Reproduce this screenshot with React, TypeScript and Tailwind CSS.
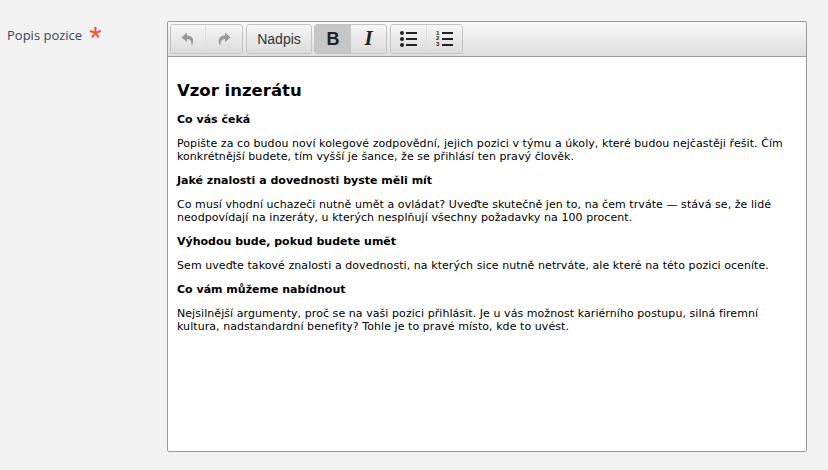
import { ReactNode } from "react";

const groupBtn = "flex items-center justify-center h-[28px] bg-gradient-to-b from-[#f6f6f6] to-[#dcdcdc]";

function Group({ children, gap }: { children: ReactNode; gap: string }) {
  return (
    <div className={`flex h-[30px] border border-[#c4c4c4] rounded-[3px] overflow-hidden ${gap}`}>
      {children}
    </div>
  );
}

function Undo({ flip }: { flip?: boolean }) {
  return (
    <svg width="14" height="14" viewBox="0 0 14 14" className={flip ? "-scale-x-100" : ""}>
      <path d="M6 0.5 L0.5 5.5 L6 10 L6 7 C9 7 10.5 9 10.8 13.5 C13.5 9.5 12.5 3.5 6 3.5 Z" fill="#999" />
    </svg>
  );
}

function Lines() {
  return (
    <svg width="17" height="16" viewBox="0 0 17 16" className="absolute left-0 top-0">
      <rect x="6" y="1" width="11" height="2" fill="#222" />
      <rect x="6" y="7" width="11" height="2" fill="#222" />
      <rect x="6" y="13" width="11" height="2" fill="#222" />
    </svg>
  );
}

function Bullets() {
  return (
    <div className="relative w-[17px] h-[16px]">
      <svg width="5" height="16" viewBox="0 0 5 16" className="absolute left-0 top-0">
        <circle cx="2" cy="2" r="2" fill="#222" />
        <circle cx="2" cy="8" r="2" fill="#222" />
        <circle cx="2" cy="14" r="2" fill="#222" />
      </svg>
      <Lines />
    </div>
  );
}

function Numbers() {
  return (
    <div className="relative w-[17px] h-[16px]">
      <div className="w-[5px] flex flex-col font-['Liberation_Sans',sans-serif] font-bold text-[6px] leading-[5.4px] text-[#222]">
        <span>1</span>
        <span>2</span>
        <span>3</span>
      </div>
      <Lines />
    </div>
  );
}

const h = "font-bold mb-[11px]";
const p = "mb-[11px] tracking-[0.064px]";

export default function App() {
  return (
    <div className="w-[828px] h-[470px] bg-[#f2f2f2] flex pt-[21px] overflow-hidden">
      <div className="w-[167px] pl-[7px] pt-[5px] flex items-start font-['Open_Sans',sans-serif] text-[13px] leading-[18px] text-[#37475a]">
        <span>Popis pozice</span>
        <span className="ml-[7px] mt-[-4px] text-[#f0522b] text-[32px] leading-[32px] font-['Liberation_Sans',sans-serif]">*</span>
      </div>
      <div className="w-[640px] h-[431px] border border-[#999] rounded-[2px] flex flex-col bg-white">
        <div className="h-[35px] shrink-0 flex items-start pl-[2px] pt-[2px] border-b border-[#999] bg-gradient-to-b from-[#f8f8f8] to-[#dedede]">
          <Group gap="mr-[3px]">
            <div className={`${groupBtn} w-[35px] border-r border-[#e0e0e0]`}><Undo /></div>
            <div className={`${groupBtn} w-[36px]`}><Undo flip /></div>
          </Group>
          <Group gap="mr-[2px]">
            <div className={`${groupBtn} w-[64px] font-['Liberation_Sans',sans-serif] text-[14px] text-[#333]`}>Nadpis</div>
          </Group>
          <Group gap="mr-[3px]">
            <div className="flex items-center justify-center h-[28px] w-[36px] bg-[#c6c6c6] font-['Liberation_Sans',sans-serif] font-bold text-[18px] text-[#222]">B</div>
            <div className={`${groupBtn} w-[35px] font-['Liberation_Serif',serif] italic font-bold text-[21px] text-[#222]`}>I</div>
          </Group>
          <Group gap="">
            <div className={`${groupBtn} w-[36px] border-r border-[#e0e0e0]`}><Bullets /></div>
            <div className={`${groupBtn} w-[35px]`}><Numbers /></div>
          </Group>
        </div>
        <div className="flex-1 px-[9px] pt-[23px] font-['DejaVu_Sans',sans-serif] text-[11px] leading-[13px] text-black">
          <h1 className="font-bold text-[16.5px] leading-[21px] mb-[12px]">Vzor inzerátu</h1>
          <div className={h}>Co vás čeká</div>
          <div className={p}>Popište za co budou noví kolegové zodpovědní, jejich pozici v týmu a úkoly, které budou nejčastěji řešit. Čím konkrétnější budete, tím vyšší je šance, že se přihlásí ten pravý člověk.</div>
          <div className={h}>Jaké znalosti a dovednosti byste měli mít</div>
          <div className={p}>Co musí vhodní uchazeči nutně umět a ovládat? Uveďte skutečně jen to, na čem trváte — stává se, že lidé neodpovídají na inzeráty, u kterých nesplňují všechny požadavky na 100 procent.</div>
          <div className={h}>Výhodou bude, pokud budete umět</div>
          <div className={p}>Sem uveďte takové znalosti a dovednosti, na kterých sice nutně netrváte, ale které na této pozici oceníte.</div>
          <div className={h}>Co vám můžeme nabídnout</div>
          <div className={p}>Nejsilnější argumenty, proč se na vaši pozici přihlásit. Je u vás možnost kariérního postupu, silná firemní kultura, nadstandardní benefity? Tohle je to pravé místo, kde to uvést.</div>
        </div>
      </div>
    </div>
  );
}
